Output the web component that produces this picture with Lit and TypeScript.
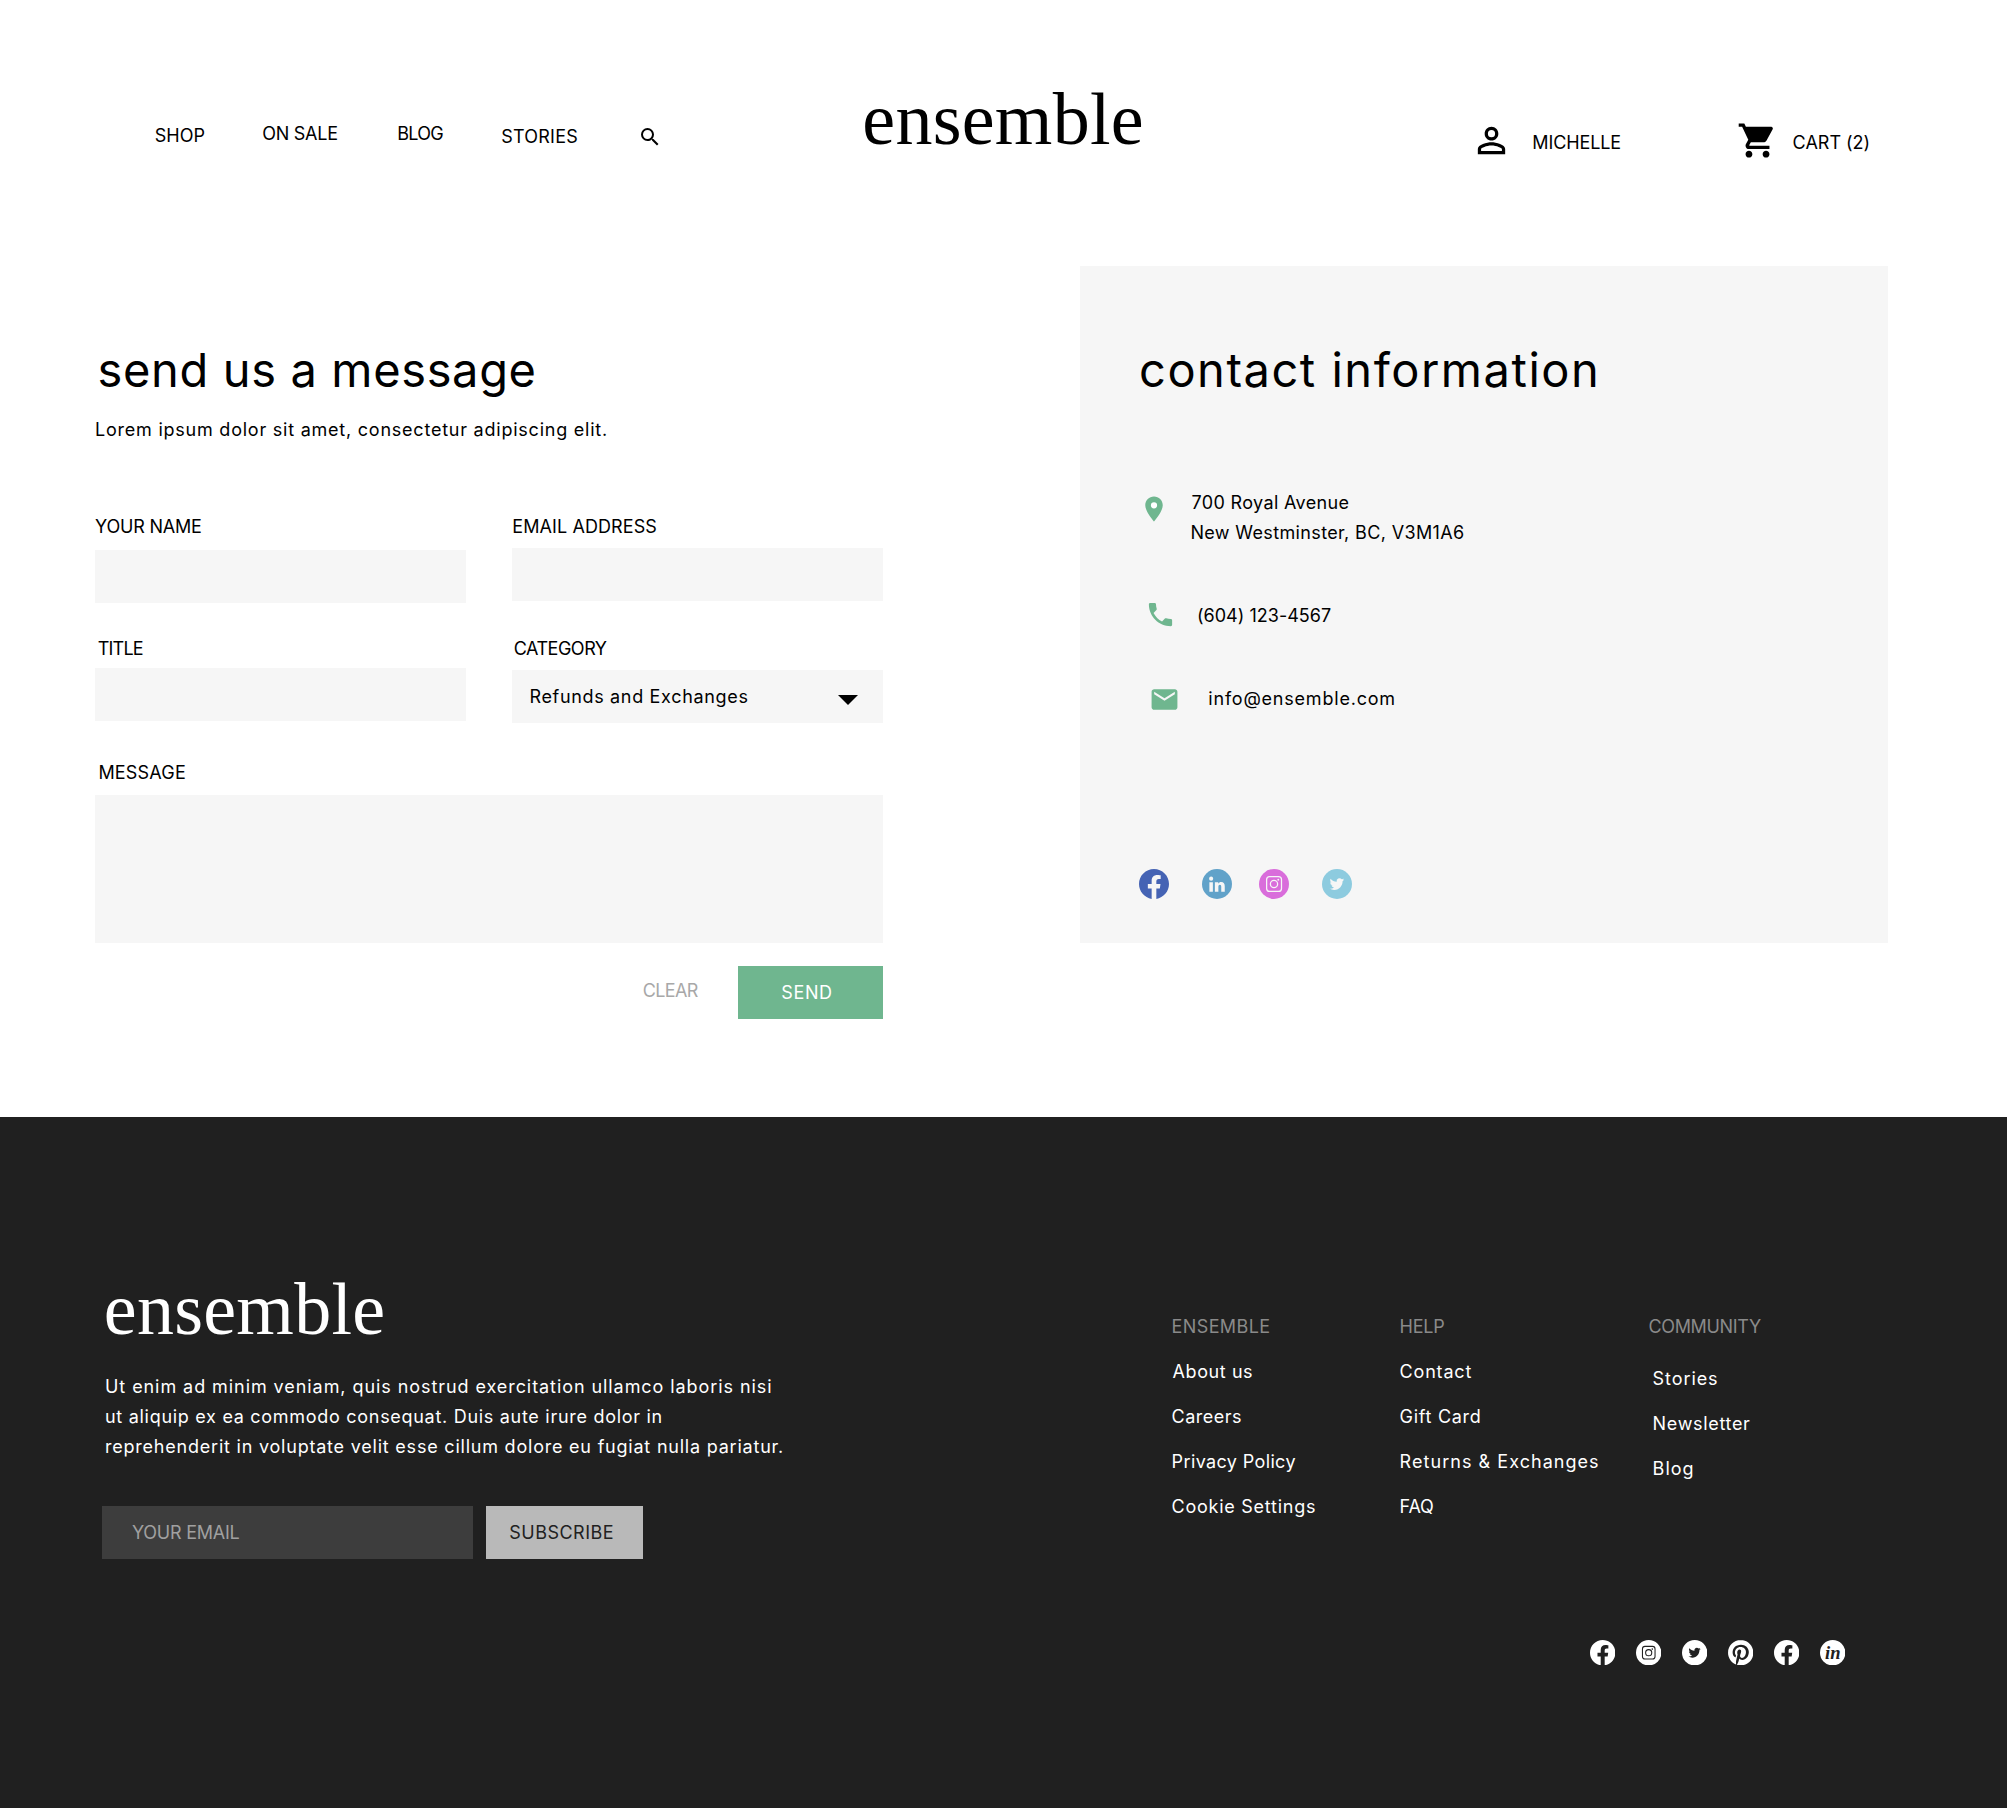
import { LitElement, html, css, svg } from "lit";

/* Single line of text tracked so that its ink spans exactly `width` pixels. */
class TrackedText extends LitElement {
  static properties = {
    text: { type: String },
    width: { type: Number },
  };
  declare text: string;
  declare width: number;

  static styles = css`
    :host {
      display: block;
      white-space: nowrap;
    }
    .line {
      display: block;
    }
  `;

  constructor() {
    super();
    this.text = "";
    this.width = 0;
  }

  render() {
    return html`<span class="line">${this.text}</span>`;
  }

  updated() {
    const line = this.renderRoot.querySelector(".line") as HTMLElement;
    const cs = getComputedStyle(this);
    const ctx = document.createElement("canvas").getContext("2d")!;
    ctx.font = `${cs.fontWeight} ${cs.fontSize} ${cs.fontFamily}`;
    const m = ctx.measureText(this.text);
    const ink = m.actualBoundingBoxLeft + m.actualBoundingBoxRight;
    const gaps = Math.max(1, this.text.length - 1);
    line.style.letterSpacing = `${((this.width - ink) / gaps).toFixed(3)}px`;
    line.style.marginLeft = `${m.actualBoundingBoxLeft.toFixed(2)}px`;
    this.style.width = `${this.width}px`;
  }
}
customElements.define("tracked-text", TrackedText);

const t = (text: string, width: number, cls = "") =>
  html`<tracked-text class=${cls} .text=${text} .width=${width}></tracked-text>`;

const icon = (cls: string, body: unknown) =>
  html`<svg class="icon ${cls}" viewBox="0 0 24 24">${body}</svg>`;

const searchIcon = svg`<path d="M15.5 14h-.79l-.28-.27A6.471 6.471 0 0 0 16 9.5 6.5 6.5 0 1 0 9.5 16c1.61 0 3.09-.59 4.23-1.57l.27.28v.79l5 4.99L20.49 19l-4.99-5zm-6 0C7.01 14 5 11.99 5 9.5S7.01 5 9.5 5 14 7.01 14 9.5 11.99 14 9.5 14z"/>`;
const personIcon = svg`<path d="M12 5.9a2.1 2.1 0 1 1 0 4.2 2.1 2.1 0 0 1 0-4.2m0 9c2.97 0 6.1 1.46 6.1 2.1v1.1H5.9V17c0-.64 3.13-2.1 6.1-2.1M12 4C9.79 4 8 5.79 8 8s1.79 4 4 4 4-1.79 4-4-1.79-4-4-4zm0 9c-2.67 0-8 1.34-8 4v3h16v-3c0-2.66-5.33-4-8-4z"/>`;
const cartIcon = svg`<path d="M7 18c-1.1 0-1.99.9-1.99 2S5.9 22 7 22s2-.9 2-2-.9-2-2-2zM1 2v2h2l3.6 7.59-1.35 2.45c-.16.28-.25.61-.25.96 0 1.1.9 2 2 2h12v-2H7.42c-.14 0-.25-.11-.25-.25l.03-.12.9-1.63h7.45c.75 0 1.41-.41 1.75-1.03l3.58-6.49A1.003 1.003 0 0 0 20 4H5.21l-.94-2H1zm16 16c-1.1 0-1.99.9-1.99 2s.89 2 1.99 2 2-.9 2-2-.9-2-2-2z"/>`;
const pinIcon = svg`<circle cx="12" cy="9" r="3" fill="#fff"/><path d="M12 2C8.13 2 5 5.13 5 9c0 5.25 7 13 7 13s7-7.75 7-13c0-3.87-3.13-7-7-7zm0 9.5a2.5 2.5 0 0 1 0-5 2.5 2.5 0 0 1 0 5z"/>`;
const phoneIcon = svg`<path d="M6.62 10.79c1.44 2.83 3.76 5.14 6.59 6.59l2.2-2.2c.27-.27.67-.36 1.02-.24 1.12.37 2.33.57 3.57.57.55 0 1 .45 1 1V20c0 .55-.45 1-1 1-9.39 0-17-7.61-17-17 0-.55.45-1 1-1h3.5c.55 0 1 .45 1 1 0 1.25.2 2.45.57 3.57.11.35.03.74-.25 1.02l-2.2 2.2z"/>`;
const mailIcon = svg`<path d="M20 4H4c-1.1 0-1.99.9-1.99 2L2 18c0 1.1.9 2 2 2h16c1.1 0 2-.9 2-2V6c0-1.1-.9-2-2-2zm0 4l-8 5-8-5V6l8 5 8-5v2z"/>`;

const disc = svg`<circle cx="12" cy="12" r="12"/>`;
const facebookIcon = svg`<path d="M24 12.073c0-6.627-5.373-12-12-12s-12 5.373-12 12c0 5.99 4.388 10.954 10.125 11.854v-8.385H7.078v-3.47h3.047V9.43c0-3.007 1.792-4.669 4.533-4.669 1.312 0 2.686.235 2.686.235v2.953H15.83c-1.491 0-1.956.925-1.956 1.874v2.25h3.328l-.532 3.47h-2.796v8.385C19.612 23.027 24 18.062 24 12.073z"/>`;
const instagramIcon = svg`${disc}<g class="knock-line"><rect x="6.1" y="6" width="11.9" height="11.9" rx="2.4"/><circle cx="12" cy="12" r="2.9"/></g><circle class="knock" cx="15.4" cy="8.6" r=".75"/>`;
const twitterIcon = svg`${disc}<path class="knock" transform="translate(6.1 6.3) scale(.48)" d="M23.953 4.57a10 10 0 0 1-2.825.775 4.958 4.958 0 0 0 2.163-2.723c-.951.555-2.005.959-3.127 1.184a4.92 4.92 0 0 0-8.384 4.482C7.69 8.095 4.067 6.13 1.64 3.162a4.822 4.822 0 0 0-.666 2.475c0 1.71.87 3.213 2.188 4.096a4.904 4.904 0 0 1-2.228-.616v.06a4.923 4.923 0 0 0 3.946 4.827 4.996 4.996 0 0 1-2.212.085 4.936 4.936 0 0 0 4.604 3.417 9.867 9.867 0 0 1-6.102 2.105c-.39 0-.779-.023-1.17-.067a13.995 13.995 0 0 0 7.557 2.209c9.053 0 13.998-7.496 13.998-13.985 0-.21 0-.42-.015-.63A9.935 9.935 0 0 0 24 4.59z"/>`;
const linkedinIcon = svg`${disc}<g class="knock"><circle cx="7.3" cy="7.7" r="1.65"/><rect x="5.9" y="10.6" width="2.8" height="7.6"/><path d="M10.3 10.6H13v1.1c.5-.8 1.3-1.3 2.3-1.3 2.1 0 2.9 1.4 2.9 3.4v4.4h-2.8v-4c0-1-.3-1.6-1.1-1.6s-1.2.6-1.2 1.6v4h-2.8z"/></g>`;
const linkedinSerifIcon = svg`${disc}<text class="knock serif-in" x="4.8" y="17.6" textLength="14.6" lengthAdjust="spacingAndGlyphs">in</text>`;
const pinterestIcon = svg`<path d="M12.017 0C5.396 0 .029 5.367.029 11.987c0 5.079 3.158 9.417 7.618 11.162-.105-.949-.199-2.403.041-3.439.219-.937 1.406-5.957 1.406-5.957s-.359-.72-.359-1.781c0-1.663.967-2.911 2.168-2.911 1.024 0 1.518.769 1.518 1.688 0 1.029-.653 2.567-.992 3.992-.285 1.193.6 2.165 1.775 2.165 2.128 0 3.768-2.245 3.768-5.487 0-2.861-2.063-4.869-5.008-4.869-3.41 0-5.409 2.562-5.409 5.199 0 1.033.394 2.143.889 2.741.099.12.112.225.085.345-.09.375-.293 1.199-.334 1.363-.053.225-.172.271-.401.165-1.495-.69-2.433-2.878-2.433-4.646 0-3.776 2.748-7.252 7.92-7.252 4.158 0 7.392 2.967 7.392 6.923 0 4.135-2.607 7.462-6.233 7.462-1.214 0-2.354-.629-2.758-1.379l-.749 2.848c-.269 1.045-1.004 2.352-1.498 3.146 1.123.345 2.306.535 3.55.535 6.607 0 11.985-5.365 11.985-11.987C23.97 5.39 18.592.026 11.985.026z"/>`;

class AppRoot extends LitElement {
  static styles = css`
    :host {
      display: block;
      height: 1808px;
      overflow: hidden;
      background: #fff;
      color: #000;
      font-family: Inter, "Liberation Sans", sans-serif;
      font-size: 18px;
      line-height: 30px;
    }
    * {
      box-sizing: border-box;
    }
    .icon {
      display: block;
      flex: none;
      fill: currentColor;
    }
    .logo {
      font-family: "Liberation Serif", serif;
      font-size: 74px;
      line-height: 80px;
    }
    .title {
      font-size: 47px;
      line-height: 60px;
    }

    /* header */
    header {
      display: grid;
      grid-template-columns: 707.5px 607px 1fr;
      align-items: start;
      height: 266px;
      padding-left: 156.8px;
    }
    nav {
      display: grid;
      grid-template-columns: 106.4px 135px 105px 135px 24px;
      align-items: start;
      padding-top: 119px;
    }
    .n0 { margin: 2px 0 0 -1px; }
    .n3 { margin: 3px 0 0 -1px; }
    .search { width: 24px; height: 24px; margin-top: 6px; }
    header .logo { margin-top: 79px; }
    .account {
      display: flex;
      align-items: center;
      padding-top: 120px;
      height: 161px;
    }
    .person { width: 41px; height: 41px; }
    .cart { width: 41px; height: 41px; margin-left: 117px; }
    .user { margin: 5px 0 0 21px; }
    .count { margin: 5px 0 0 15.3px; }

    /* contact area */
    main {
      display: flex;
      align-items: flex-start;
      height: 851px;
      padding-left: 95px;
    }
    form {
      display: block;
      width: 788px;
      padding-top: 74px;
      margin-right: 197px;
    }
    form .title { margin-left: 4.6px; }
    .intro { margin: 15px 0 0 1px; }
    .grid {
      display: grid;
      grid-template-columns: 371px 371px;
      column-gap: 46px;
      margin-top: 67px;
    }
    .field { height: 53px; background: #f6f6f6; }
    .cell { height: 122px; }
    .cell.name .field { margin-top: 8px; }
    .cell.email .field { margin-top: 6px; }
    .cell.email tracked-text { margin-left: 1.3px; }
    .cell.subject .field { margin-top: 4px; }
    .cell.category .field { margin-top: 6px; }
    .cell.subject .label, .cell.category .label { margin-left: 2.8px; }
    .select {
      display: flex;
      align-items: center;
      justify-content: space-between;
      padding: 1px 25px 0 18.4px;
    }
    .arrow {
      width: 20px;
      height: 10px;
      margin-top: 6px;
      background: #000;
      clip-path: polygon(0 0, 100% 0, 50% 100%);
    }
    .message-label { margin: 2px 0 0 4.4px; }
    .area { height: 148px; margin-top: 7px; background: #f6f6f6; }
    .actions {
      display: flex;
      justify-content: flex-end;
      align-items: center;
      margin-top: 23px;
    }
    .clear { margin: 0 39.3px 3px 0; color: #a8a8a8; }
    .send {
      display: flex;
      align-items: center;
      width: 145px;
      height: 53px;
      padding-left: 44.3px;
      background: #6fb68f;
      color: #fff;
    }
    .panel {
      width: 808px;
      height: 677px;
      padding: 74px 0 0 59px;
      background: #f6f6f6;
    }
    .panel .title { margin-left: 2px; }
    .info { display: flex; align-items: flex-start; color: #000; }
    .info .icon { color: #6fb68f; }
    .address { margin-top: 88px; }
    .pin { width: 30px; height: 30px; margin: 6px 22.4px 0 0; }
    .phone { margin: 50px 0 0 5.7px; }
    .phone .icon { width: 31px; height: 31px; margin: .5px 22.3px 0 0; }
    .phone tracked-text { margin-top: 3px; }
    .mail { margin: 53px 0 0 9.8px; }
    .mail .icon { width: 31px; height: 31px; margin-right: 29.5px; }
    .socials {
      display: grid;
      grid-template-columns: 63px 57px 63px 30px;
      margin-top: 154px;
      --knock: #f6f6f6;
    }
    .socials .icon { width: 30px; height: 30px; }
    .fb { color: #4563b4; }
    .li { color: #61a2c9; }
    .ig { color: #d96ddb; }
    .tw { color: #8dcbdf; }
    .knock { fill: var(--knock); }
    .knock-line { fill: none; stroke: var(--knock); stroke-width: 1; }
    .serif-in {
      font: italic bold 18px "Liberation Serif", serif;
    }

    /* footer */
    footer {
      display: flex;
      align-items: flex-start;
      height: 691px;
      padding-left: 102px;
      background: #202020;
      color: #fff;
    }
    .about { width: 1071px; padding-top: 152px; }
    .about .logo { margin-left: 3.8px; }
    .copy { margin: 23px 0 0 4px; }
    .subscribe { display: flex; gap: 13px; margin-top: 44px; }
    .email-box, .subscribe-btn {
      display: flex;
      align-items: center;
      height: 53px;
    }
    .email-box { width: 371px; padding-left: 30px; background: #3d3d3d; color: #a0a0a0; }
    .subscribe-btn { width: 157px; padding-left: 24.2px; background: #b9b9b9; color: #212121; }
    .links {
      display: grid;
      grid-template-columns: 228px 249px 1fr;
      row-gap: 119px;
      padding-top: 195px;
      width: 673px;
    }
    .col { display: flex; flex-direction: column; gap: 15px; height: 209px; }
    .col .item, .col .head { margin-left: -.4px; }
    .head { color: #8a8a8a; }
    .col.community .head { margin: 0 0 7px -.6px; }
    .col.community .item { margin-left: 3.6px; }
    .follow {
      grid-column: 1 / -1;
      display: flex;
      gap: 20.6px;
      margin-left: 417px;
      --knock: #202020;
    }
    .follow .icon { width: 25.4px; height: 25.4px; }
  `;

  private column(cls: string, items: [string, number][]) {
    return html`<div class="col ${cls}">
      ${items.map(([label, w], i) => t(label, w, i ? "item" : "head"))}
    </div>`;
  }

  render() {
    return html`
      <header>
        <nav>
          ${t("SHOP", 48.6, "n0")} ${t("ON SALE", 74)} ${t("BLOG", 45)}
          ${t("STORIES", 75, "n3")} ${icon("search", searchIcon)}
        </nav>
        ${t("ensemble", 277.5, "logo")}
        <div class="account">
          ${icon("person", personIcon)} ${t("MICHELLE", 87, "user")}
          ${icon("cart", cartIcon)} ${t("CART (2)", 75, "count")}
        </div>
      </header>
      <main>
        <form>
          ${t("send us a message", 435, "title")}
          ${t("Lorem ipsum dolor sit amet, consectetur adipiscing elit.", 510, "intro")}
          <div class="grid">
            <div class="cell name">${t("YOUR NAME", 106)}<div class="field"></div></div>
            <div class="cell email">${t("EMAIL ADDRESS", 143)}<div class="field"></div></div>
            <div class="cell subject">${t("TITLE", 45, "label")}<div class="field"></div></div>
            <div class="cell category">
              ${t("CATEGORY", 92, "label")}
              <div class="field select">
                ${t("Refunds and Exchanges", 217)}<span class="arrow"></span>
              </div>
            </div>
          </div>
          ${t("MESSAGE", 85.6, "message-label")}
          <div class="area"></div>
          <div class="actions">
            ${t("CLEAR", 55, "clear")}
            <div class="send">${t("SEND", 48.8)}</div>
          </div>
        </form>
        <section class="panel">
          ${t("contact information", 455, "title")}
          <div class="info address">
            ${icon("pin", pinIcon)}
            <div>${t("700 Royal Avenue", 157.2)}${t("New Westminster, BC, V3M1A6", 272.6)}</div>
          </div>
          <div class="info phone">${icon("", phoneIcon)}${t("(604) 123-4567", 133)}</div>
          <div class="info mail">${icon("", mailIcon)}${t("info@ensemble.com", 185)}</div>
          <div class="socials">
            ${icon("fb", facebookIcon)}${icon("li", linkedinIcon)}
            ${icon("ig", instagramIcon)}${icon("tw", twitterIcon)}
          </div>
        </section>
      </main>
      <footer>
        <div class="about">
          ${t("ensemble", 277.5, "logo")}
          <div class="copy">
            ${t("Ut enim ad minim veniam, quis nostrud exercitation ullamco laboris nisi", 665.3)}
            ${t("ut aliquip ex ea commodo consequat. Duis aute irure dolor in", 555.5)}
            ${t("reprehenderit in voluptate velit esse cillum dolore eu fugiat nulla pariatur.", 676)}
          </div>
          <div class="subscribe">
            <div class="email-box">${t("YOUR EMAIL", 107.5)}</div>
            <div class="subscribe-btn">${t("SUBSCRIBE", 102.6)}</div>
          </div>
        </div>
        <div class="links">
          ${this.column("", [["ENSEMBLE", 96.6], ["About us", 79.5], ["Careers", 68.5], ["Privacy Policy", 122.8], ["Cookie Settings", 142.3]])}
          ${this.column("", [["HELP", 43.7], ["Contact", 70.8], ["Gift Card", 79.2], ["Returns & Exchanges", 197.5], ["FAQ", 32.5]])}
          ${this.column("community", [["COMMUNITY", 111.5], ["Stories", 63.5], ["Newsletter", 96.5], ["Blog", 39]])}
          <div class="follow">
            ${icon("", facebookIcon)}${icon("", instagramIcon)}${icon("", twitterIcon)}
            ${icon("", pinterestIcon)}${icon("", facebookIcon)}${icon("", linkedinSerifIcon)}
          </div>
        </div>
      </footer>
    `;
  }
}
customElements.define("app-root", AppRoot);
